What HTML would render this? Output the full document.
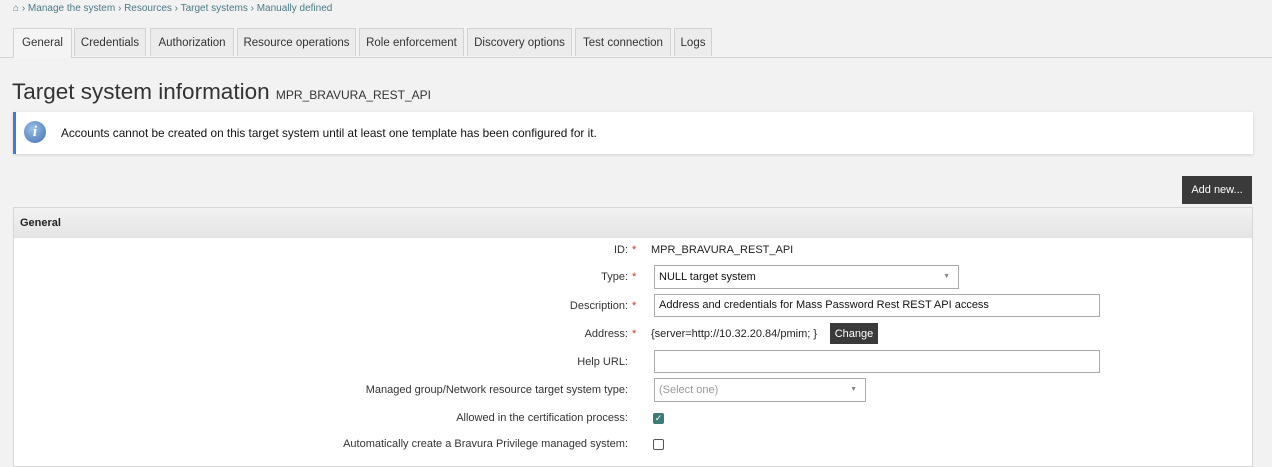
<!DOCTYPE html>
<html><head><style>
body{margin:0;width:1272px;height:453px;overflow:hidden;background:#f2f2f2;font-family:"Liberation Sans",sans-serif;font-size:11px;color:#222;position:relative}
.a{position:absolute}
.bc{top:3px;left:13px;color:#4a7a86;font-size:10px}
.tab{position:absolute;top:28px;height:28px;border:1px solid #d2d2d2;border-bottom:none;background:#ececec;line-height:28px;text-align:center;font-size:11.5px;color:#333;box-sizing:border-box}
.tab.on{background:#f4f4f4;height:30px}
.lbl{position:absolute;right:644px;text-align:right;font-size:11px;color:#333}
.st{position:absolute;left:632px;color:#c0392b;font-size:11px}
.inp{position:absolute;left:654px;background:#fff;border:1px solid #aaa;box-sizing:border-box;font-size:11px;padding-left:4px;line-height:21px}
.arr{position:absolute;right:8px;top:0;color:#888;font-size:7px}
</style></head><body>
<div class="a bc"><span style="color:#4a7a86">&#8962;</span> › Manage the system › Resources › Target systems › Manually defined</div>
<div class="a" style="left:0;top:57px;width:1272px;height:1px;background:#d2d2d2"></div>
<div class="tab on" style="left:13px;width:59px">General</div>
<div class="tab" style="left:74px;width:72px">Credentials</div>
<div class="tab" style="left:150px;width:84px">Authorization</div>
<div class="tab" style="left:237px;width:119px">Resource operations</div>
<div class="tab" style="left:359px;width:105px">Role enforcement</div>
<div class="tab" style="left:467px;width:105px">Discovery options</div>
<div class="tab" style="left:575px;width:96px">Test connection</div>
<div class="tab" style="left:674px;width:38px">Logs</div>
<div class="a" style="left:12px;top:79px;font-size:22.5px;color:#333">Target system information <span style="font-size:12px">MPR_BRAVURA_REST_API</span></div>
<div class="a" style="left:13px;top:112px;width:1240px;height:42px;background:#fff;border-left:3px solid #3b7dd8;box-sizing:border-box;box-shadow:0 1px 3px rgba(0,0,0,.15)">
<div class="a" style="left:8px;top:9px;width:22px;height:22px;border-radius:50%;background:radial-gradient(circle at 40% 35%,#9cc0e8,#3d6fb0);color:#fff;font:italic bold 15px 'Liberation Serif',serif;text-align:center;line-height:22px">i</div>
<div class="a" style="left:45px;top:14px;font-size:11.8px;color:#111">Accounts cannot be created on this target system until at least one template has been configured for it.</div></div>
<div class="a" style="left:1182px;top:176px;width:70px;height:28px;background:#3a3a3a;color:#fff;line-height:28px;text-align:center;font-size:11px">Add new...</div>
<div class="a" style="left:13px;top:207px;width:1240px;height:260px;background:#fff;border:1px solid #d6d6d6;box-sizing:border-box">
<div style="height:30px;background:linear-gradient(#f2f2f2,#e4e4e4);line-height:30px;padding-left:6px;font-weight:bold;font-size:11px;color:#222">General</div></div>
<div class="lbl" style="top:244px">ID:</div><div class="st" style="top:244px">*</div>
<div class="a" style="left:651px;top:244px">MPR_BRAVURA_REST_API</div>
<div class="lbl" style="top:271px">Type:</div><div class="st" style="top:271px">*</div>
<div class="inp" style="top:265px;width:305px;height:24px;line-height:22px;color:#111">NULL target system<span class="arr">▼</span></div>
<div class="lbl" style="top:300px">Description:</div><div class="st" style="top:300px">*</div>
<div class="inp" style="top:294px;width:446px;height:23px;color:#111">Address and credentials for Mass Password Rest REST API access</div>
<div class="lbl" style="top:328px">Address:</div><div class="st" style="top:328px">*</div>
<div class="a" style="left:651px;top:328px">{server=http://10.32.20.84/pmim; }</div>
<div class="a" style="left:830px;top:323px;width:48px;height:21px;background:#3a3a3a;color:#fff;line-height:22px;text-align:center">Change</div>
<div class="lbl" style="top:356px">Help URL:</div>
<div class="inp" style="top:350px;width:446px;height:23px"></div>
<div class="lbl" style="top:384px">Managed group/Network resource target system type:</div>
<div class="inp" style="top:378px;width:212px;height:24px;line-height:22px;color:#999">(Select one)<span class="arr">▼</span></div>
<div class="lbl" style="top:412px">Allowed in the certification process:</div>
<div class="a" style="left:653px;top:413px;width:11px;height:11px;background:#3d7a78;border-radius:2px;color:#fff;font-size:9px;line-height:11px;text-align:center">✓</div>
<div class="lbl" style="top:438px">Automatically create a Bravura Privilege managed system:</div>
<div class="a" style="left:653px;top:439px;width:9px;height:9px;border:1px solid #555;border-radius:2px;background:#fff"></div>
</body></html>
